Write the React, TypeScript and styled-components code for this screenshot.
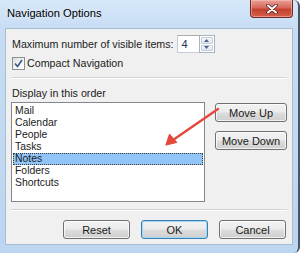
import React from "react";
import styled, { createGlobalStyle, css } from "styled-components";

const GlobalStyle = createGlobalStyle`
  html, body {
    margin: 0;
    padding: 0;
    background: #ffffff;
  }
  body {
    font-family: "Liberation Sans", Arial, sans-serif;
    font-size: 10.7px;
    color: #1b1b1b;
  }
`;

const items = ["Mail", "Calendar", "People", "Tasks", "Notes", "Folders", "Shortcuts"];
const selectedItem = "Notes";

const App: React.FC = () => {
  return (
    <>
      <GlobalStyle />
      <Window>
        <TitleBar>
          <Title>Navigation Options</Title>
          <CloseButton aria-label="Close">
            <svg width="12" height="10" viewBox="0 0 12 10">
              <path
                d="M2 1.5 L10 8.5 M10 1.5 L2 8.5"
                stroke="#5a2020"
                strokeWidth="3.6"
                strokeLinecap="round"
              />
              <path
                d="M2 1.5 L10 8.5 M10 1.5 L2 8.5"
                stroke="#ffffff"
                strokeWidth="2"
                strokeLinecap="round"
              />
            </svg>
          </CloseButton>
        </TitleBar>

        <Client>
          <Row>
            <Label>Maximum number of visible items:</Label>
            <Spinner>
              <SpinValue>4</SpinValue>
              <SpinButtons>
                <SpinButton>
                  <svg width="5" height="3" viewBox="0 0 5 3">
                    <path d="M0 3 L2.5 0 L5 3 Z" fill="#4d6185" />
                  </svg>
                </SpinButton>
                <SpinButton>
                  <svg width="5" height="3" viewBox="0 0 5 3">
                    <path d="M0 0 L2.5 3 L5 0 Z" fill="#4d6185" />
                  </svg>
                </SpinButton>
              </SpinButtons>
            </Spinner>
          </Row>

          <CheckRow>
            <CheckBox>
              <svg width="9" height="9" viewBox="0 0 9 9">
                <path
                  d="M1 4.5 L3.5 7.5 L8 1"
                  fill="none"
                  stroke="#3b5590"
                  strokeWidth="1.6"
                />
              </svg>
            </CheckBox>
            <Label>Compact Navigation</Label>
          </CheckRow>

          <Separator />

          <SectionLabel>Display in this order</SectionLabel>

          <OrderArea>
            <ListBox>
              {items.map((item) => (
                <ListItem key={item} $selected={item === selectedItem}>
                  {item}
                </ListItem>
              ))}
            </ListBox>
            <SideButtons>
              <Button $width={72}>Move Up</Button>
              <Button $width={72}>Move Down</Button>
            </SideButtons>
          </OrderArea>

          <Separator />

          <Footer>
            <Button $width={67}>Reset</Button>
            <Button $width={67} $default>
              OK
            </Button>
            <Button $width={67}>Cancel</Button>
          </Footer>
        </Client>

        <Annotation width="70" height="50" viewBox="0 0 70 50">
          <path d="M61 6 L16 37" stroke="#e5483c" strokeWidth="2.4" strokeLinecap="round" />
          <path d="M9 42 L12.5 31.5 L19.5 39.5 Z" fill="#e5483c" stroke="#e5483c" strokeWidth="1.2" strokeLinejoin="round" />
        </Annotation>
      </Window>
    </>
  );
};

export default App;

const Window = styled.div`
  position: relative;
  width: 300px;
  height: 253px;
  box-sizing: border-box;
  display: flex;
  flex-direction: column;
  background: linear-gradient(180deg, #d6e7f9 0%, #c6dcf4 12%, #bcd5f0 100%);
  border-right: 2px solid #4a5462;
  border-bottom-right-radius: 6px;
  border-top-right-radius: 6px;
`;

const TitleBar = styled.div`
  height: 28px;
  display: flex;
  align-items: flex-start;
  justify-content: space-between;
  padding: 0 5px 0 7px;
`;

const Title = styled.div`
  margin-top: 7px;
  font-size: 11.2px;
  color: #000000;
  text-shadow: 0 0 6px rgba(255, 255, 255, 0.9);
`;

const CloseButton = styled.div`
  width: 43px;
  height: 18px;
  box-sizing: border-box;
  display: flex;
  align-items: center;
  justify-content: center;
  border: 1px solid #6e2a22;
  border-top: none;
  border-radius: 0 0 4px 4px;
  background: linear-gradient(180deg, #e8a398 0%, #d6675b 45%, #c4412f 55%, #d2604a 100%);
  box-shadow: inset 0 0 0 1px rgba(255, 200, 190, 0.5);
`;

const Client = styled.div`
  flex: 1;
  margin: 0 5px 8px 5px;
  box-sizing: border-box;
  background: #f0f0f0;
  border: 1px solid #aabccf;
  padding: 6px 3px 0 6px;
  display: flex;
  flex-direction: column;
`;

const Row = styled.div`
  display: flex;
  align-items: center;
  height: 18px;
`;

const Label = styled.span`
  white-space: nowrap;
  line-height: 13px;
`;

const Spinner = styled.div`
  display: flex;
  margin-left: 3px;
  height: 18px;
`;

const SpinValue = styled.div`
  width: 22px;
  box-sizing: border-box;
  background: #ffffff;
  border: 1px solid #c5cdd8;
  border-top-color: #abadb3;
  border-right: none;
  padding-left: 4px;
  line-height: 16px;
  font-size: 11px;
  color: #1c2f55;
`;

const SpinButtons = styled.div`
  width: 16px;
  display: flex;
  flex-direction: column;
  box-sizing: border-box;
  border: 1px solid #a8b3c2;
  background: #ffffff;
`;

const SpinButton = styled.div`
  flex: 1;
  display: flex;
  align-items: center;
  justify-content: center;
  margin: 1px;
  background: linear-gradient(180deg, #f4f6f9 0%, #dfe5ee 100%);
  border: 1px solid #c5ceda;
  border-radius: 1px;
  & + & {
    margin-top: 0;
  }
`;

const CheckRow = styled.div`
  display: flex;
  align-items: center;
  gap: 2px;
  margin-top: 4px;
  height: 13px;
`;

const CheckBox = styled.div`
  width: 13px;
  height: 13px;
  box-sizing: border-box;
  display: flex;
  align-items: center;
  justify-content: center;
  border: 1px solid #8e8f8f;
  background: linear-gradient(135deg, #dcdcdc 0%, #f6f6f6 60%, #ffffff 100%);
`;

const Separator = styled.div`
  height: 1px;
  margin: 7px 2px 0 -1px;
  background: #d5d5d5;
  border-bottom: 1px solid #ffffff;
`;

const SectionLabel = styled.div`
  margin-top: 7px;
  line-height: 14px;
`;

const OrderArea = styled.div`
  display: flex;
  align-items: flex-start;
  gap: 10px;
  margin-top: 2px;
`;

const ListBox = styled.div`
  width: 194px;
  height: 100px;
  box-sizing: border-box;
  margin-left: -1px;
  background: #ffffff;
  border: 1px solid #828790;
  padding-top: 2px;
`;

const ListItem = styled.div<{ $selected?: boolean }>`
  height: 12px;
  line-height: 12px;
  font-size: 10.4px;
  margin: 0 1px;
  padding-left: 2px;
  box-sizing: border-box;
  ${({ $selected }) =>
    $selected &&
    css`
      background: #91c4f7;
      outline: 1px dotted #3a3a3a;
      outline-offset: -1px;
    `}
`;

const SideButtons = styled.div`
  display: flex;
  flex-direction: column;
  gap: 9px;
  margin-top: 1px;
`;

const Button = styled.div<{ $width: number; $default?: boolean }>`
  width: ${({ $width }) => $width}px;
  height: 19px;
  box-sizing: border-box;
  display: flex;
  align-items: center;
  justify-content: center;
  border: 1px solid ${({ $default }) => ($default ? "#3c7fb1" : "#707070")};
  border-radius: 3px;
  background: linear-gradient(180deg, #f2f2f2 0%, #ebebeb 48%, #dddddd 52%, #cfcfcf 100%);
  box-shadow: inset 0 0 0 1px ${({ $default }) => ($default ? "#9fd8f7" : "rgba(255, 255, 255, 0.7)")};
  color: #1b1b1b;
  font-size: 11px;
`;

const Footer = styled.div`
  display: flex;
  justify-content: flex-end;
  gap: 11px;
  margin-top: 9px;
  padding-right: 3px;
`;

const Annotation = styled.svg`
  position: absolute;
  left: 157px;
  top: 103px;
  pointer-events: none;
`;
